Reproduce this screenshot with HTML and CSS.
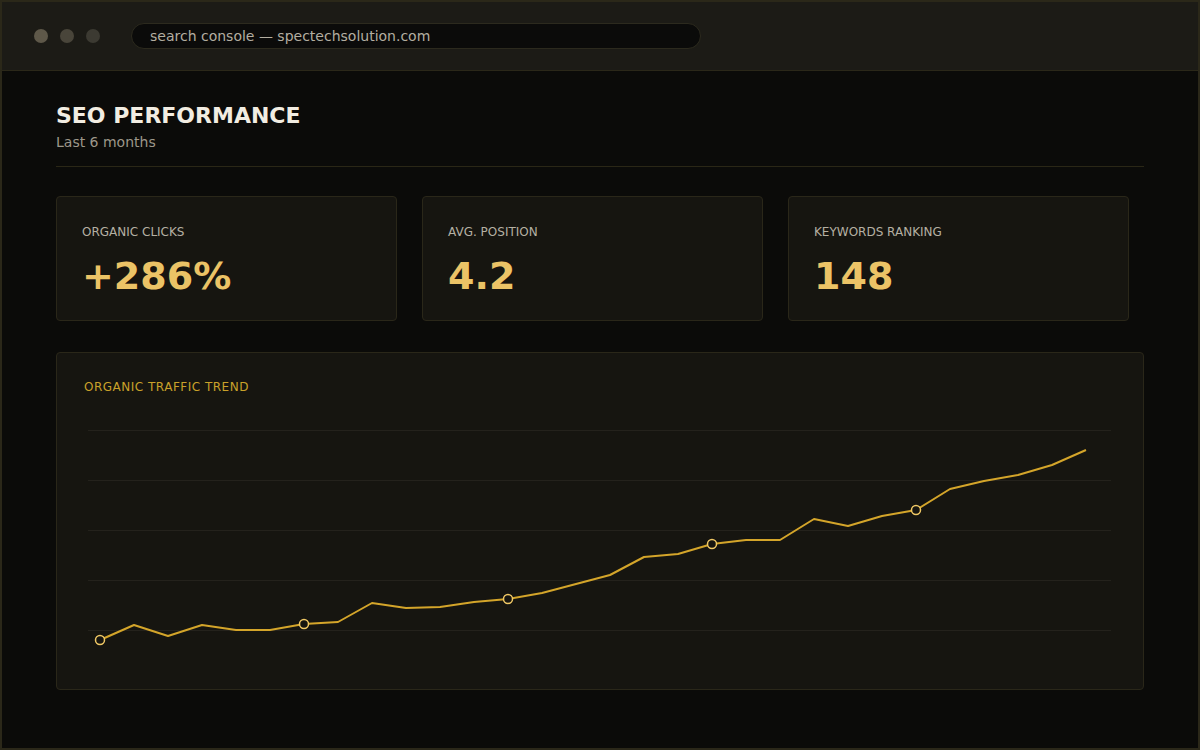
FILE: index.html
```html
<!DOCTYPE html>
<html lang="en">
<head>
    <meta charset="UTF-8">
    <meta name="viewport" content="width=device-width, initial-scale=1.0">
    <title>SEO Performance</title>
    <link rel="stylesheet" href="styles.css">
</head>
<body>
    <div class="window">
        <header class="topbar">
            <div class="dots">
                <span class="dot dot-1"></span>
                <span class="dot dot-2"></span>
                <span class="dot dot-3"></span>
            </div>
            <div class="address">search console — spectechsolution.com</div>
        </header>

        <main class="content">
            <div class="page-head">
                <h1>SEO PERFORMANCE</h1>
                <p>Last 6 months</p>
            </div>

            <div class="stats">
                <div class="stat-card">
                    <div class="stat-label">ORGANIC CLICKS</div>
                    <div class="stat-value">+286%</div>
                </div>
                <div class="stat-card">
                    <div class="stat-label">AVG. POSITION</div>
                    <div class="stat-value">4.2</div>
                </div>
                <div class="stat-card">
                    <div class="stat-label">KEYWORDS RANKING</div>
                    <div class="stat-value">148</div>
                </div>
            </div>

            <section class="chart-panel">
                <div class="chart-title">ORGANIC TRAFFIC TREND</div>
                <svg class="chart" width="1032" height="260" viewBox="0 0 1032 260">
                    <g class="grid">
                        <line x1="4" y1="20.5" x2="1027" y2="20.5"></line>
                        <line x1="4" y1="70.5" x2="1027" y2="70.5"></line>
                        <line x1="4" y1="120.5" x2="1027" y2="120.5"></line>
                        <line x1="4" y1="170.5" x2="1027" y2="170.5"></line>
                        <line x1="4" y1="220.5" x2="1027" y2="220.5"></line>
                    </g>
                    <polyline class="trend" points="16,230 50,215 84,226 118,215 152,220 186,220 220,214 254,212 288,193 322,198 356,197 390,192 424,189 458,183 492,174 526,165 560,147 594,144 628,134 662,130 696,130 730,109 764,116 798,106 832,100 866,79 900,71 934,65 968,55 1002,40"></polyline>
                    <g class="markers">
                        <circle cx="16" cy="230" r="4.5"></circle>
                        <circle cx="220" cy="214" r="4.5"></circle>
                        <circle cx="424" cy="189" r="4.5"></circle>
                        <circle cx="628" cy="134" r="4.5"></circle>
                        <circle cx="832" cy="100" r="4.5"></circle>
                    </g>
                </svg>
            </section>
        </main>
    </div>
</body>
</html>
```

FILE: styles.css
```css
/* Global styles */
* {
    box-sizing: border-box;
}

body {
    font-family: 'DejaVu Sans', 'Liberation Sans', sans-serif;
    margin: 0;
    padding: 0;
    background-color: #0b0b09;
    color: #f0ebe0;
}

.window {
    width: 1200px;
    height: 750px;
    border: 2px solid #2b2819;
    background-color: #0b0b09;
    display: flex;
    flex-direction: column;
}

/* Top bar */
.topbar {
    height: 69px;
    background-color: #1c1b16;
    border-bottom: 1px solid #2b2819;
    display: flex;
    align-items: center;
    padding: 0 0 0 32px;
}

.dots {
    display: flex;
    gap: 12px;
    margin-right: 31px;
}

.dot {
    width: 14px;
    height: 14px;
    border-radius: 50%;
}

.dot-1 { background-color: #5e5849; }
.dot-2 { background-color: #49453a; }
.dot-3 { background-color: #3c3a32; }

.address {
    width: 570px;
    height: 26px;
    border: 1px solid #2c2a1e;
    border-radius: 13px;
    background-color: #0b0b0a;
    color: #b3aea1;
    font-size: 14px;
    line-height: 24px;
    padding-left: 18px;
}

/* Main content */
.content {
    padding: 32px 54px 0;
}

.page-head {
    padding-bottom: 15px;
    border-bottom: 1px solid #2a2716;
}

.page-head h1 {
    font-size: 22px;
    font-weight: 700;
    margin: 0;
    line-height: 26px;
    color: #f2ede2;
}

.page-head p {
    margin: 4px 0 0;
    font-size: 14px;
    line-height: 18px;
    color: #9d978a;
}

.stats {
    display: grid;
    grid-template-columns: repeat(3, 341px);
    gap: 25px;
    margin-top: 29px;
}

.stat-card {
    background-color: #161510;
    border: 1px solid #2a2719;
    border-radius: 4px;
    height: 125px;
    padding: 28px 25px 0;
}

.stat-label {
    font-size: 12px;
    line-height: 14px;
    color: #b5b0a3;
}

.stat-value {
    margin-top: 14px;
    font-size: 38px;
    line-height: 46px;
    font-weight: 700;
    color: #ebc366;
}

/* Chart */
.chart-panel {
    margin-top: 31px;
    background-color: #161510;
    border: 1px solid #2a2719;
    border-radius: 4px;
    padding: 26px 27px 19px;
}

.chart-title {
    font-size: 12px;
    line-height: 16px;
    letter-spacing: 0.5px;
    color: #c9a12a;
    margin-bottom: 15px;
}

.chart {
    display: block;
}

.grid line {
    stroke: #24221c;
    stroke-width: 1;
}

.trend {
    fill: none;
    stroke: #d4a52a;
    stroke-width: 2;
    stroke-linejoin: round;
}

.markers circle {
    fill: #161510;
    stroke: #f0c865;
    stroke-width: 1.5;
}
```
